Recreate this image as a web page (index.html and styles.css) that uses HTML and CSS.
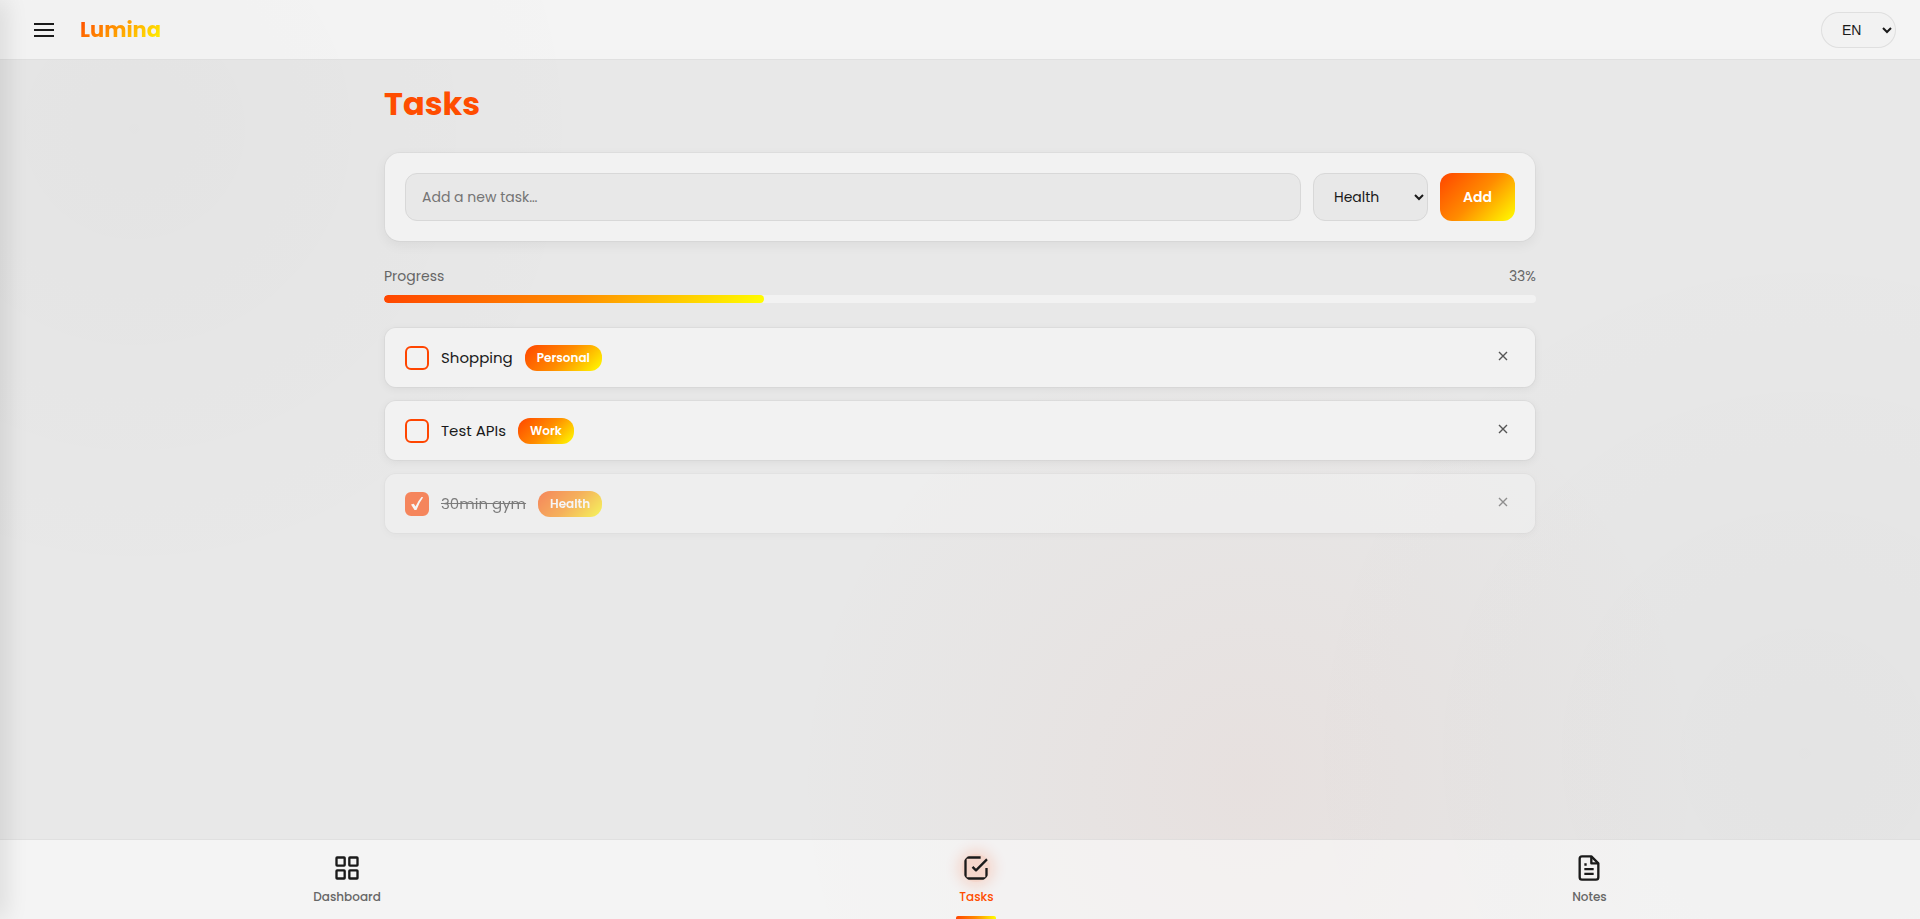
FILE: index.html
```html
<!DOCTYPE html>
<html lang="en">
<head>
<meta charset="utf-8">
<meta name="viewport" content="width=device-width, initial-scale=1">
<title>Lumina</title>
<link rel="stylesheet" href="styles.css">
</head>
<body>
<header class="topbar">
  <div class="topbar-left">
    <button class="menu-button" type="button" aria-label="Menu">
      <svg class="icon-menu" viewBox="0 0 24 24" aria-hidden="true"><path d="M2 6h20M2 12h20M2 18h20"/></svg>
    </button>
    <span class="logo">Lumina</span>
  </div>
  <select class="language" aria-label="Language"><option>EN</option></select>
</header>

<main class="content">
  <h1 class="title">Tasks</h1>
  <form class="add-form">
    <input class="field task-input" type="text" placeholder="Add a new task…" aria-label="New task">
    <select class="field category" aria-label="Category"><option>Health</option></select>
    <button class="add-button" type="button">Add</button>
  </form>

  <section class="progress">
    <div class="progress-head"><span>Progress</span><span>33%</span></div>
    <div class="progress-track"><div class="progress-fill" style="width:33%"></div></div>
  </section>

  <ul class="tasks">
    <li class="task">
      <input class="check" type="checkbox" id="task-1">
      <label class="task-name" for="task-1">Shopping</label>
      <span class="tag">Personal</span>
      <button class="remove" type="button" aria-label="Delete Shopping"><svg viewBox="0 0 10 10" aria-hidden="true"><path d="M1 1l8 8M9 1l-8 8"/></svg></button>
    </li>
    <li class="task">
      <input class="check" type="checkbox" id="task-2">
      <label class="task-name" for="task-2">Test APIs</label>
      <span class="tag">Work</span>
      <button class="remove" type="button" aria-label="Delete Test APIs"><svg viewBox="0 0 10 10" aria-hidden="true"><path d="M1 1l8 8M9 1l-8 8"/></svg></button>
    </li>
    <li class="task done">
      <input class="check" type="checkbox" id="task-3" checked>
      <label class="task-name" for="task-3">30min gym</label>
      <span class="tag">Health</span>
      <button class="remove" type="button" aria-label="Delete 30min gym"><svg viewBox="0 0 10 10" aria-hidden="true"><path d="M1 1l8 8M9 1l-8 8"/></svg></button>
    </li>
  </ul>
</main>

<nav class="bottom-nav">
  <a class="nav-item" href="#dashboard">
    <svg class="nav-icon" viewBox="0 0 24 24" aria-hidden="true"><rect x="3" y="3" width="7" height="7" rx=".5"/><rect x="14" y="3" width="7" height="7" rx=".5"/><rect x="3" y="14" width="7" height="7" rx=".5"/><rect x="14" y="14" width="7" height="7" rx=".5"/></svg>
    <span>Dashboard</span>
  </a>
  <a class="nav-item active" href="#tasks">
    <svg class="nav-icon" viewBox="0 0 24 24" aria-hidden="true"><path d="M9 11l3 3L22 4"/><path d="M21 12v8.500a.5.5 0 0 1-.5.5H3.500a.5.5 0 0 1-.5-.5V3.500a.5.5 0 0 1 .5-.5H16"/></svg>
    <span>Tasks</span>
  </a>
  <a class="nav-item" href="#notes">
    <svg class="nav-icon" viewBox="0 0 24 24" aria-hidden="true"><path d="M14 2H6a2 2 0 0 0-2 2v16a2 2 0 0 0 2 2h12a2 2 0 0 0 2-2V8z"/><path d="M14 2v6h6M16 13H8M16 17H8M10 9H8"/></svg>
    <span>Notes</span>
  </a>
</nav>
</body>
</html>
```
FILE: styles.css
```css
:root {
  --accent: #ff4500;
  --sunrise: linear-gradient(135deg, #ff4500, #ff8c00 50%, #ffff00);
  --surface: #f2f2f2;
  --field: #e8e8e8;
  --line: rgba(0, 0, 0, 0.08);
  --text: #1a1a1a;
  --muted: #666;
}

* { box-sizing: border-box; }

body {
  margin: 0;
  min-height: 100vh;
  display: flex;
  flex-direction: column;
  font-family: Poppins, Inter, "Open Sans", sans-serif;
  font-size: 15px;
  color: var(--text);
  background:
    radial-gradient(circle 460px at 65% 85%, rgba(210, 80, 50, 0.05), rgba(180, 80, 50, 0.02) 60%, transparent),
    radial-gradient(circle 540px at 94% 82%, rgba(0, 0, 0, 0.02), transparent),
    radial-gradient(circle 480px at 7% 14%, rgba(0, 0, 0, 0.02), transparent),
    #e8e8e8;
}

body::before {
  content: "";
  position: fixed;
  top: 0;
  bottom: 0;
  left: -20px;
  width: 20px;
  z-index: 5;
  box-shadow: 4px 0 24px rgba(0, 0, 0, 0.12);
  pointer-events: none;
}

button, input, select { font: inherit; color: inherit; }
button { border: 0; cursor: pointer; }

.topbar {
  display: flex;
  align-items: center;
  justify-content: space-between;
  height: 60px;
  padding: 0 24px;
  background: rgba(255, 255, 255, 0.5);
  border-bottom: 1px solid var(--line);
}

.topbar-left { display: flex; align-items: center; gap: 16px; }

.menu-button { display: flex; padding: 8px; background: none; }

.icon-menu {
  width: 24px;
  height: 24px;
  fill: none;
  stroke: var(--text);
  stroke-width: 2;
}

.logo {
  font-size: 21px;
  line-height: 32px;
  font-weight: 700;
  background: linear-gradient(135deg, #ff4500, #ff8c00 40%, #ffff00);
  -webkit-background-clip: text;
  background-clip: text;
  color: transparent;
}

.language {
  width: 75px;
  height: 36px;
  padding: 0 0 0 16px;
  border: 1px solid var(--line);
  border-radius: 18px;
  background: var(--surface);
  font-family: "Liberation Sans", Arial, sans-serif;
  font-size: 14px;
}

.content {
  flex: 1;
  width: 100%;
  max-width: 1200px;
  margin: 0 auto;
  padding: 20px 24px;
}

.title {
  margin: 0 0 24px;
  font-size: 32px;
  line-height: 48px;
  font-weight: 700;
  color: #ff4d00;
}

.add-form {
  display: flex;
  gap: 12px;
  padding: 20px;
  border: 1px solid rgba(0, 0, 0, 0.03);
  border-radius: 16px;
  background: var(--surface);
  background-clip: padding-box;
  box-shadow: 0 4px 12px rgba(0, 0, 0, 0.05);
}

.field {
  height: 48px;
  border: 1px solid #d8d8d8;
  border-radius: 12px;
  background: var(--field);
  font-size: 14px;
}

.task-input { flex: 1; min-width: 0; padding: 0 16px; }
.task-input::placeholder { color: #757575; }
.category { width: 115px; padding: 0 0 0 16px; }

.add-button {
  width: 75px;
  border-radius: 12px;
  background: var(--sunrise);
  color: #fff;
  font-size: 14px;
  font-weight: 600;
}

.progress { margin: 24px 0; }

.progress-head {
  display: flex;
  justify-content: space-between;
  margin-bottom: 8px;
  font-size: 14px;
  line-height: 21px;
  color: var(--muted);
}

.progress-track {
  height: 8px;
  border-radius: 4px;
  background: var(--surface);
  overflow: hidden;
}

.progress-fill { height: 100%; border-radius: 4px; background: var(--sunrise); }

.tasks {
  display: flex;
  flex-direction: column;
  gap: 12px;
  margin: 0;
  padding: 0;
  list-style: none;
}

.task {
  display: flex;
  align-items: center;
  gap: 12px;
  height: 61px;
  padding: 0 20px;
  border: 1px solid rgba(0, 0, 0, 0.03);
  border-radius: 12px;
  background: var(--surface);
  background-clip: padding-box;
  box-shadow: 0 2px 8px rgba(0, 0, 0, 0.05);
}

.check {
  appearance: none;
  width: 24px;
  height: 24px;
  margin: 0;
  border: 2px solid var(--accent);
  border-radius: 6px;
}

.check:checked {
  background: var(--accent) url("data:image/svg+xml,%3Csvg xmlns='http://www.w3.org/2000/svg' viewBox='0 0 20 20'%3E%3Cpath d='M4 10.500L6.800 9.800 8.500 12.500Q11 7 14.500 3L16.200 3.200Q11.800 9 9.500 16H7.500Z' fill='white'/%3E%3C/svg%3E") center / 20px no-repeat;
}

.tag {
  padding: 0 12px;
  border-radius: 12px;
  background: var(--sunrise);
  color: #fff;
  font-size: 12px;
  line-height: 26px;
  font-weight: 600;
}

.remove {
  display: flex;
  margin: 0 0 4px auto;
  padding: 7px;
  background: none;
}

.remove svg { width: 10px; height: 10px; fill: none; stroke: #555; stroke-width: 1.4; }

.done { opacity: 0.6; }
.done .task-name { text-decoration: line-through; color: #333; }

.bottom-nav {
  display: flex;
  justify-content: space-around;
  padding: 0 24px;
  background: rgba(255, 255, 255, 0.5);
  border-top: 1px solid var(--line);
}

.nav-item {
  position: relative;
  display: flex;
  flex-direction: column;
  align-items: center;
  gap: 6px;
  padding: 14px 24px 13px;
  color: var(--muted);
  font-size: 12px;
  line-height: 18px;
  font-weight: 500;
  text-decoration: none;
}

.nav-icon {
  width: 28px;
  height: 28px;
  fill: none;
  stroke: var(--text);
  stroke-width: 2;
  stroke-linejoin: round;
}

.active { color: #ff4d00; }
.active .nav-icon { border-radius: 50%; background: rgba(255, 69, 0, 0.16); box-shadow: 0 0 14px 4px rgba(255, 69, 0, 0.16); }

.active::after {
  content: "";
  position: absolute;
  bottom: 0;
  left: 50%;
  width: 40px;
  height: 3px;
  margin-left: -20px;
  border-radius: 2px 2px 0 0;
  background: linear-gradient(90deg, #ff4500, #ff8c00, #ffff00);
}
```
